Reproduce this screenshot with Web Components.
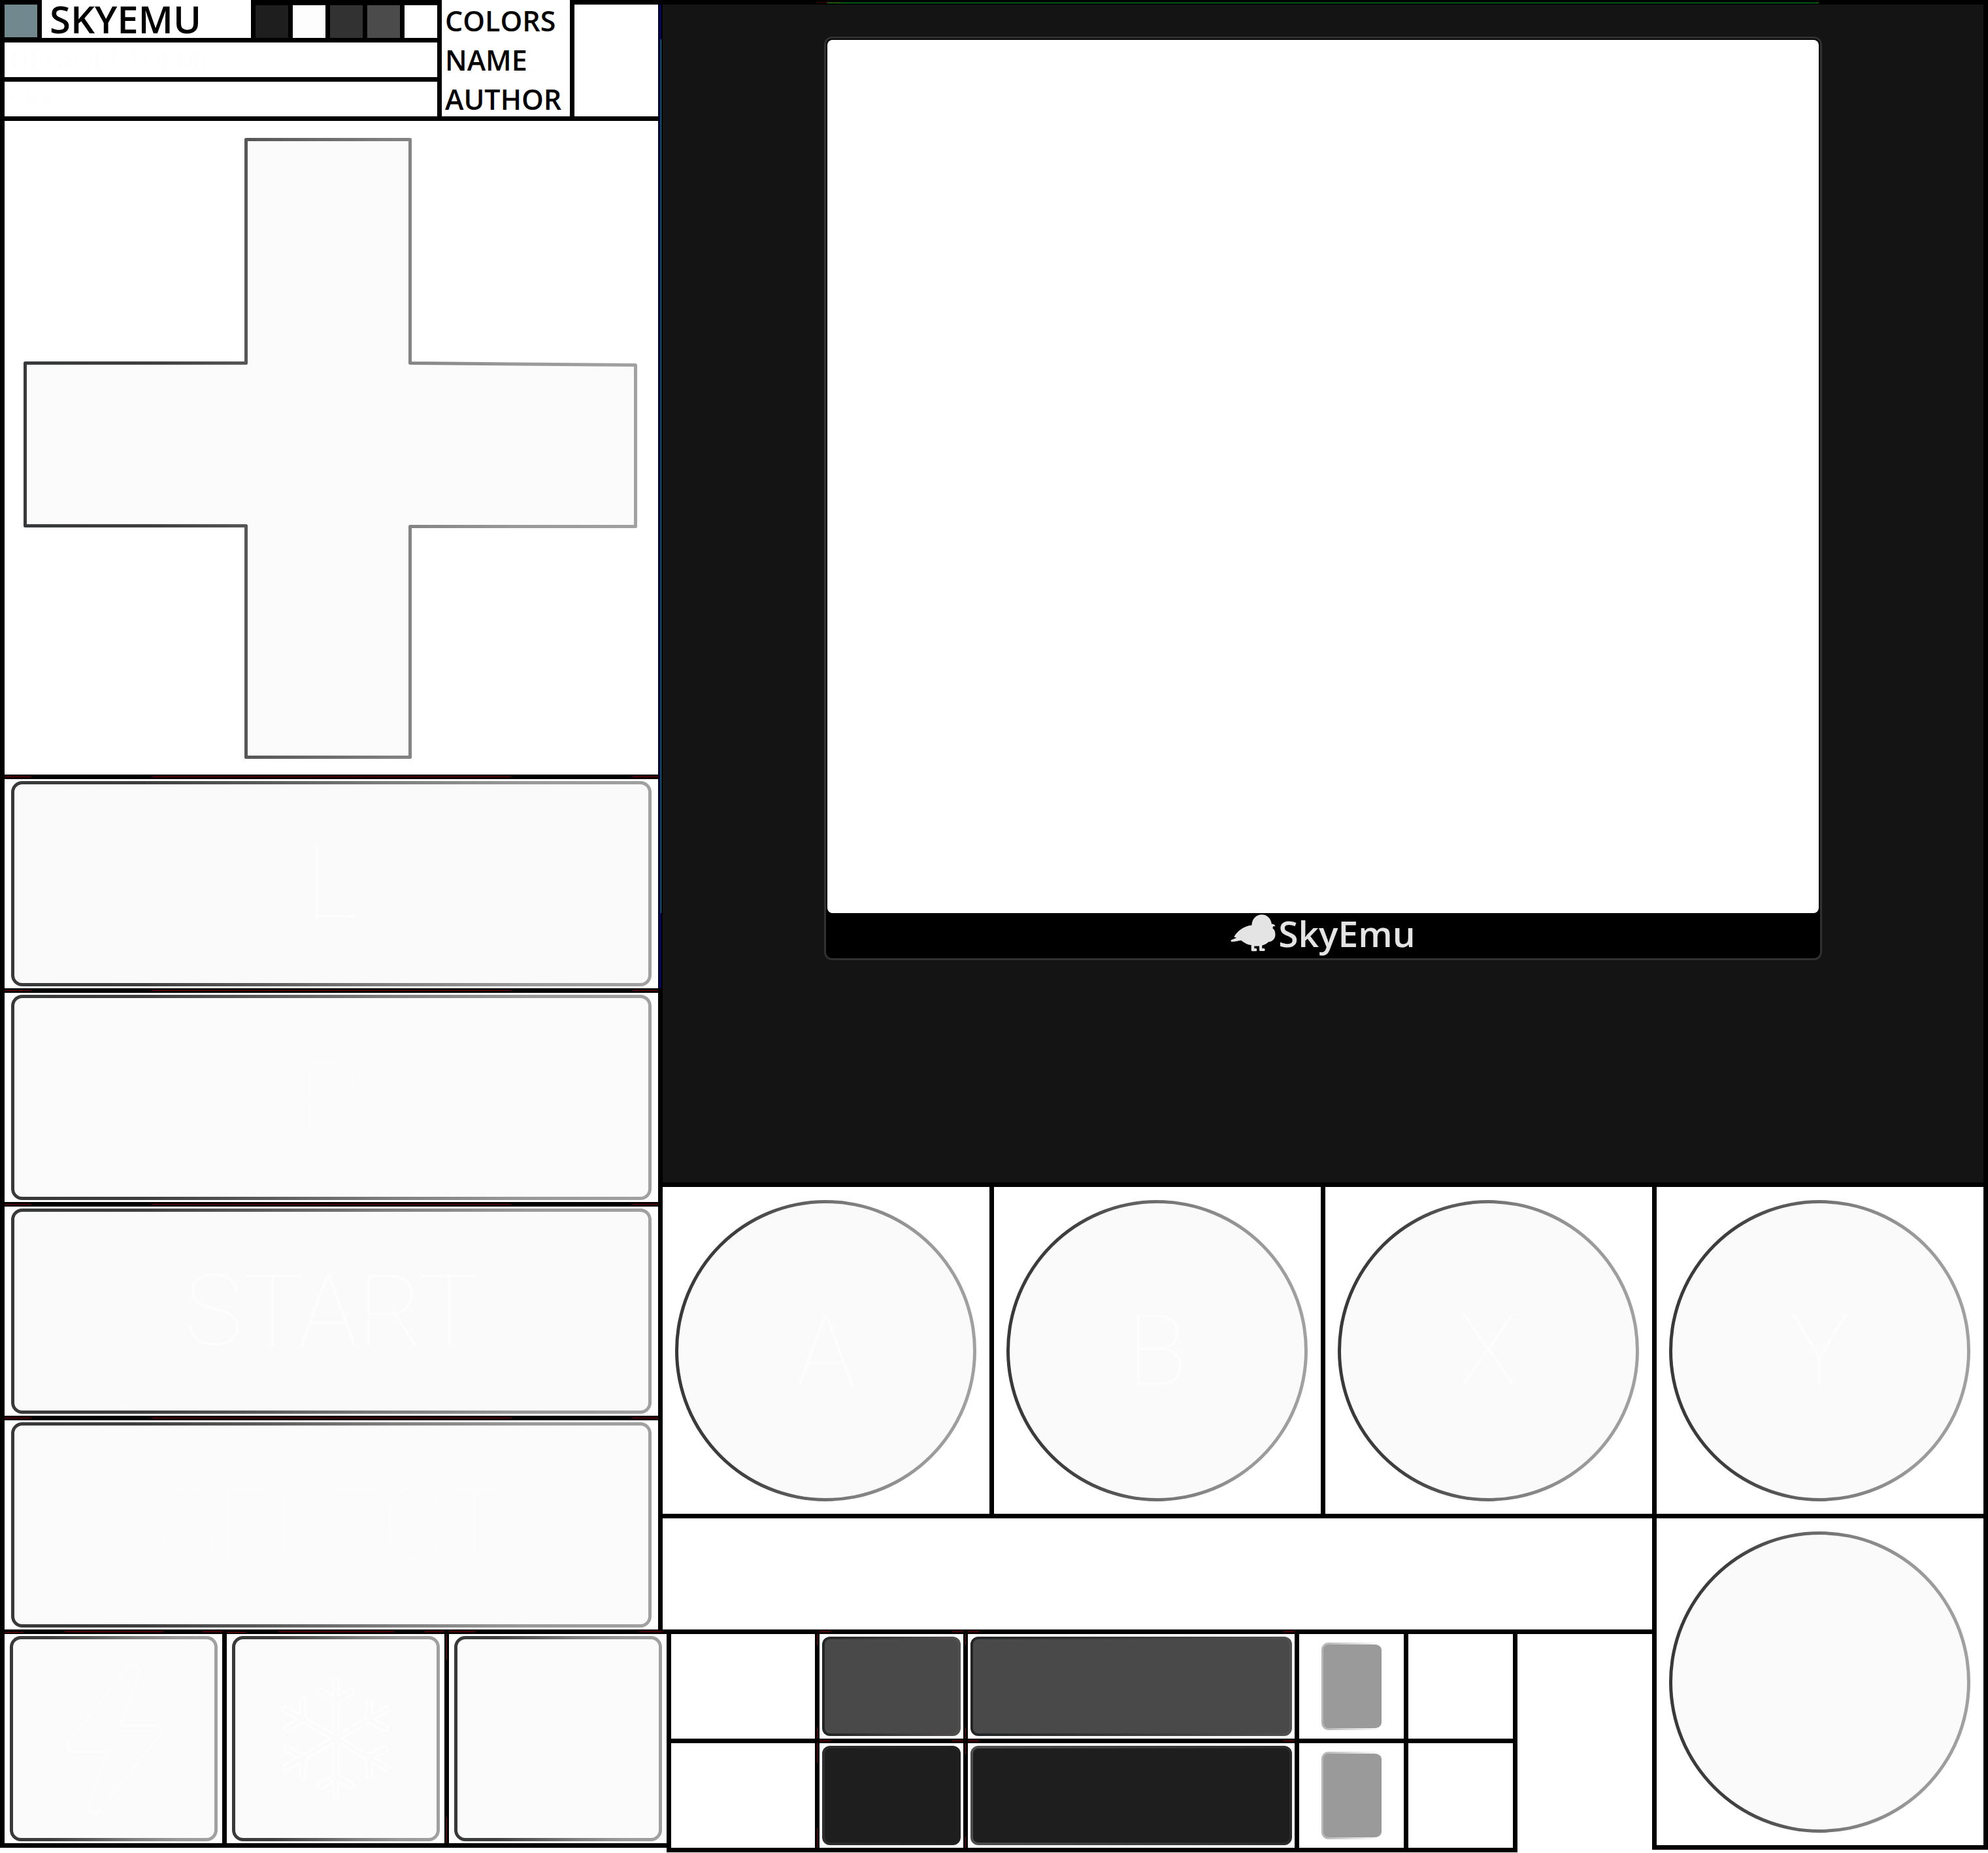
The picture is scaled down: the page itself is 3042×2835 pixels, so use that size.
<!DOCTYPE html>
<html lang="en">
<head>
<meta charset="utf-8">
<title>SkyEmu theme sheet</title>
<style>
  html, body { margin: 0; background: #fff; }
  body { font-family: "Open Sans", "Noto Sans", sans-serif; color: #000; }
</style>
</head>
<body>
<theme-sheet></theme-sheet>

<script>
const define = (name, html) => {
  const tpl = document.createElement('template');
  tpl.innerHTML = html;
  customElements.define(name, class extends HTMLElement {
    constructor() {
      super();
      this.attachShadow({ mode: 'open' }).append(tpl.content.cloneNode(true));
    }
  });
};

const EDGE = 'linear-gradient(90deg,#38393a 0%,#3e3e3e 20%,#5c5c5c 40%,#808080 60%,#999 80%,#a1a1a1 100%)';

/* White cell with an inset button */
define('pad-key', `
<style>
  :host { display: grid; box-sizing: border-box; min-width: 0; background: #fff; height: 320px; padding: 3px 10px; }
  button {
    box-sizing: border-box; width: 100%; height: 100%; margin: 0; padding: 0;
    display: flex; align-items: center; justify-content: center;
    border: 5px solid transparent; border-radius: 17px;
    background: linear-gradient(#fafafa,#fafafa) padding-box, ${EDGE} border-box;
    font: 100 152px/180px Roboto, "Liberation Sans", sans-serif; color: #fdfdfd;
  }
  :host([soft]) button { background: linear-gradient(#fbfbfb,#fbfbfb) padding-box, ${EDGE} border-box; color: #fcfcfc; }
  :host([small]) { padding: 3px 7px 3px 8px; }
  :host([round]) { height: auto; aspect-ratio: 1; padding: 20px 20px 19px 19px; }
  :host([round]) button { border-radius: 50%; }
</style>
<button type="button"><slot></slot></button>`);

/* Direction cross */
define('pad-cross', `
<style>
  :host { display: block; background: #fff; aspect-ratio: 1; }
  svg { display: block; width: 100%; height: 100%; }
</style>
<svg viewBox="0 0 1000 1000" role="img" aria-label="D-pad">
  <defs><linearGradient id="g" gradientUnits="userSpaceOnUse" x1="29" y1="0" x2="968" y2="0">
    <stop offset="0" stop-color="#38393a"/><stop offset=".2" stop-color="#3e3e3e"/>
    <stop offset=".4" stop-color="#5c5c5c"/><stop offset=".6" stop-color="#808080"/>
    <stop offset=".8" stop-color="#999"/><stop offset="1" stop-color="#a1a1a1"/>
  </linearGradient></defs>
  <path d="M369.500 28.500H620.500V370.500L965.500 373.500V620.500H620.500V973.500H369.500V619.500H31.500V370.500H369.500Z"
    fill="#fbfbfb" stroke="url(#g)" stroke-width="5" stroke-linejoin="round"/>
</svg>`);

define('bolt-icon', `
<style>:host, svg { display: block; }</style>
<svg width="308" height="304" viewBox="5 5 308 304" fill="none" stroke="#fdfdfd" stroke-width="3" stroke-linejoin="round">
  <path d="M189 45Q199 45 199 55L169 137H224Q234 139 232 149L138 266Q134 271 128 271Q119 269 120 260L149 177H96Q87 177 89 164L177 52Q182 45 189 45Z"/>
</svg>`);

define('snow-icon', `
<style>:host, svg { display: block; }</style>
<svg width="308" height="304" viewBox="5 5 308 304" fill="none" stroke-linecap="round">
  <defs>
    <path id="a" d="M0 0V-89M0 -58L-24 -73M0 -58L24 -73"/>
    <g id="f"><use href="#a"/><use href="#a" transform="rotate(60)"/><use href="#a" transform="rotate(120)"/><use href="#a" transform="rotate(180)"/><use href="#a" transform="rotate(240)"/><use href="#a" transform="rotate(300)"/></g>
  </defs>
  <g transform="translate(159 157)"><use href="#f" stroke="#fefefe" stroke-width="11"/><use href="#f" stroke="#fbfbfb" stroke-width="6"/></g>
</svg>`);

/* Colours, name and author */
define('sheet-header', `
<style>
  :host { display: grid; grid-template-columns: 662fr 196fr 128fr; gap: 7px; height: 178px; background: #000; }
  .info, .labels { display: grid; grid-template-rows: 58px 53px 53px; row-gap: 7px; min-width: 0; }
  .top { display: grid; grid-template-columns: 57fr 320fr 285fr; }
  .tint { background: #71888e; margin: 7px 7px 1px 0; }
  h1 { margin: 0; padding-left: 12px; background: #fff; font-size: 58px; line-height: 58px; font-weight: 600; white-space: nowrap; }
  .swatches { display: grid; grid-template-columns: repeat(5, 1fr); gap: 7px; padding: 8px 0 0 7px; }
  .field { background: #fff; color: #fefefe; padding-left: 9px; font-size: 40px; line-height: 53px; font-weight: 400; white-space: nowrap; }
  .labels { background: #fff; padding-left: 5px; font-size: 43px; line-height: 52px; font-weight: 600; align-items: end; white-space: nowrap; }
  .preview { background: #fff; margin-top: 7px; }
</style>
<div class="info">
  <div class="top">
    <div class="tint"></div>
    <h1>SKYEMU</h1>
    <div class="swatches">
      <i style="background:#1e1e1e"></i><i style="background:#fdfdfd"></i><i style="background:#323232"></i><i style="background:#4b4b4b"></i><i style="background:#fff"></i>
    </div>
  </div>
  <div class="field">DEFAULT THEME</div>
  <div class="field">SKY</div>
</div>
<div class="labels"><span>COLORS</span><span>NAME</span><span>AUTHOR</span></div>
<div class="preview"></div>`);

/* Screen, bezel and brand */
define('device-screen', `
<style>
  :host { display: grid; grid-template-columns: 247fr 1527fr 247fr; padding: 49px 0 340px; background: #141414; }
  .bezel { grid-column: 2; border: 3px solid #303030; border-radius: 12px; background: #000; padding: 2px 2px 0; }
  .screen { aspect-ratio: 1517 / 1336; border-radius: 8px; background: #fff; }
  .brand { height: 69px; display: flex; justify-content: center; gap: 4px; color: #e4e4e4; }
  svg { width: 69px; height: 57px; margin-top: 2px; }
  span { font-size: 55px; line-height: 61px; font-weight: 600; }
</style>
<div class="bezel">
  <div class="screen"></div>
  <div class="brand">
    <svg viewBox="71 86 207 172" fill="#e4e4e4" aria-hidden="true">
      <path d="M168 136C169 106 190 87 214 87C240 87 257 106 260 130C267 130 275 133 277 141L268 140C267 143 265 146 264 149C274 156 277 165 277 180C276 201 262 211 246 213C238 221 229 226 216 229V243H226C231 247 230 255 224 255H207Q203 255 203 250V232H180V243H189C194 247 192 256 187 256H170Q166 256 166 250V228C148 226 132 217 119 206C104 208 91 213 76 212C70 211 70 205 76 203L98 194L86 190C101 164 130 140 168 136Z"/>
    </svg>
    <span>SkyEmu</span>
  </div>
</div>`);

/* Two rows of keyboard parts */
define('key-parts', `
<style>
  :host {
    display: grid; grid-template-columns: 220fr 220fr 500fr 160fr 160fr; grid-auto-rows: 160px; gap: 7px; padding: 0 7px 7px;
    --r: linear-gradient(#800000,#800000);
    background:
      var(--r) 230px 0/1px 17px no-repeat, var(--r) 230px 143px/1px 17px no-repeat,
      var(--r) 230px 167px/1px 30px no-repeat, var(--r) 230px 297px/1px 30px no-repeat,
      var(--r) 457px 0/1px 17px no-repeat, var(--r) 457px 143px/1px 17px no-repeat,
      var(--r) 457px 167px/1px 17px no-repeat, var(--r) 457px 310px/1px 17px no-repeat,
      var(--r) 234px 163px/17px 1px no-repeat, var(--r) 437px 163px/17px 1px no-repeat,
      var(--r) 461px 163px/17px 1px no-repeat, var(--r) 944px 163px/17px 1px no-repeat, #000;
  }
  div { background: #fff; display: grid; padding: 4px; box-sizing: border-box; min-width: 0; }
  i { border: 4px solid transparent; border-radius: 12px; background: linear-gradient(var(--c),var(--c)) padding-box, linear-gradient(90deg,var(--a),var(--b)) border-box; }
  .knob { padding: 13px 34px; }
  .knob i { border-width: 3px 0 3px 3px; --c: #9a9a9a; --a: #b4b4b4; --b: #fff; border-radius: 11px; }
</style>
<div></div><div><i style="--c:#494949;--a:#232425;--b:#52504f"></i></div><div><i style="--c:#494949;--a:#232425;--b:#505050"></i></div><div class="knob"><i></i></div><div></div>
<div></div><div><i style="--c:#1e1e1e;--a:#2d2d2d;--b:#202020"></i></div><div><i style="--c:#1e1e1e;--a:#4d4d4d;--b:#2a2a2a"></i></div><div class="knob"><i></i></div><div></div>`);

/* Whole sheet */
define('theme-sheet', `
<style>
  :host { display: grid; grid-template-columns: 2fr 3fr 1fr; align-items: start; --r: linear-gradient(#800000,#800000); --d: linear-gradient(#400000,#400000); --b: linear-gradient(#0000a0,#0000a0); --g: linear-gradient(#00a020,#00a020); }
  :host > * { min-width: 0; }
  .left {
    grid-row: 1 / 4; display: grid; gap: 7px; padding: 0 7px 7px;
    background:
      var(--b) 1009px 7px/2px 1505px no-repeat, var(--g) 1011px 60px/1px 1337px no-repeat,
      var(--b) 876px 7px/2px 153px no-repeat, var(--g) 887px 3px/112px 1px no-repeat,
      var(--r) 7px 1188px/40px 1px no-repeat, var(--r) 233px 1188px/548px 1px no-repeat, var(--r) 967px 1188px/40px 1px no-repeat,
      var(--r) 7px 1515px/40px 1px no-repeat, var(--r) 233px 1515px/548px 1px no-repeat, var(--r) 967px 1515px/40px 1px no-repeat,
      var(--r) 7px 1842px/40px 1px no-repeat, var(--r) 233px 1842px/548px 1px no-repeat, var(--r) 967px 1842px/40px 1px no-repeat,
      var(--r) 7px 2169px/40px 1px no-repeat, var(--r) 233px 2169px/548px 1px no-repeat, var(--r) 967px 2169px/40px 1px no-repeat,
      var(--r) 7px 2497px/29px 1px no-repeat, var(--r) 99px 2496px/151px 1px no-repeat, var(--r) 310px 2496px/30px 1px no-repeat,
      var(--r) 347px 2497px/29px 1px no-repeat, var(--r) 426px 2496px/177px 1px no-repeat, var(--r) 650px 2496px/30px 1px no-repeat,
      var(--r) 687px 2496px/40px 1px no-repeat, var(--r) 979px 2496px/35px 1px no-repeat, #000;
  }
  .device { grid-column: 2 / 4; padding: 7px 7px 7px 0; background: var(--g) 252px 4px/1517px 1px no-repeat, var(--d) 236px 3px/36px 1px no-repeat, #000; }
  .faces { grid-column: 2 / 4; display: grid; grid-template-columns: repeat(4, 1fr); background: #000; }
  .faces pad-key, .stick pad-key { margin: 0 7px 7px 0; }
  .bar {
    grid-column: 2; height: 177px; box-sizing: border-box; padding: 0 7px 7px 0;
    background:
      linear-gradient(#fff,#fff) content-box no-repeat,
      var(--r) 240px 173px/17px 1px no-repeat, var(--r) 443px 173px/17px 1px no-repeat,
      var(--r) 467px 173px/17px 1px no-repeat, var(--r) 950px 173px/17px 1px no-repeat, #000;
    background-origin: content-box, padding-box, padding-box, padding-box, padding-box;
  }
  .stick { grid-column: 3; grid-row: 3 / 5; background: #000; box-shadow: -7px 0 0 #000; }
  .strip { grid-column: 1 / 3; grid-row: 4; display: grid; grid-template-columns: 1020fr 1302fr 213fr; align-items: start; }
  .hot { display: grid; grid-template-columns: repeat(3, 1fr); gap: 7px; padding: 0 0 7px 7px; min-width: 0;
    background: var(--r) 683px 0/1px 40px no-repeat, var(--r) 683px 280px/1px 40px no-repeat, #000; }
  bolt-icon, snow-icon { flex: none; }
</style>
<section class="left">
  <sheet-header></sheet-header>
  <pad-cross></pad-cross>
  <pad-key>L</pad-key>
  <pad-key soft>R</pad-key>
  <pad-key>START</pad-key>
  <pad-key soft>SELECT</pad-key>
</section>
<section class="device"><device-screen></device-screen></section>
<section class="faces">
  <pad-key round>A</pad-key><pad-key round>B</pad-key><pad-key round>X</pad-key><pad-key round>Y</pad-key>
</section>
<section class="bar"></section>
<section class="stick"><pad-key round></pad-key></section>
<section class="strip">
  <div class="hot">
    <pad-key soft small><bolt-icon></bolt-icon></pad-key>
    <pad-key soft small><snow-icon></snow-icon></pad-key>
    <pad-key soft small></pad-key>
  </div>
  <key-parts></key-parts>
</section>`);
</script>
</body>
</html>
